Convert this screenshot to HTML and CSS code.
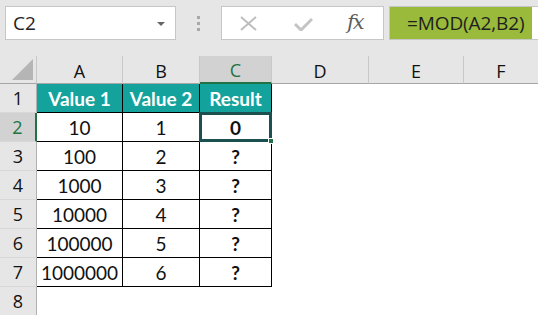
FILE: index.html
```html
<!DOCTYPE html>
<html>
<head>
<meta charset="utf-8">
<link rel="stylesheet" href="styles.css">
</head>
<body>
<div class="toolbar">
  <div class="namebox"><span class="nb-text">C2</span><span class="nb-arrow"></span></div>
  <div class="dots"><i></i><i></i><i></i></div>
  <div class="fbuttons">
    <svg class="ic-x" width="17" height="15" viewBox="0 0 17 15"><path d="M1 1 L16 14 M16 1 L1 14" stroke="#bdbdbd" stroke-width="2" fill="none"/></svg>
    <svg class="ic-check" width="19" height="14" viewBox="0 0 19 14"><path d="M1 7 L7 13 L18 2" stroke="#c4c4c4" stroke-width="3" fill="none"/></svg>
    <span class="fx">fx</span>
  </div>
  <div class="formula"><span class="ftext">=MOD(A2,B2)</span></div>
</div>
<div class="sheet">
  <div class="corner"><span class="tri"></span></div>
  <div class="ch">A</div>
  <div class="ch">B</div>
  <div class="ch sel">C</div>
  <div class="ch">D</div>
  <div class="ch">E</div>
  <div class="ch last">F</div>

  <div class="rh">1</div>
  <div class="c hd">Value 1</div>
  <div class="c hd">Value 2</div>
  <div class="c hd">Result</div>
  <div class="e"></div><div class="e"></div><div class="e"></div>

  <div class="rh sel">2</div>
  <div class="c">10</div>
  <div class="c">1</div>
  <div class="c b active">0<span class="handle"></span></div>
  <div class="e"></div><div class="e"></div><div class="e"></div>

  <div class="rh">3</div>
  <div class="c">100</div>
  <div class="c">2</div>
  <div class="c b">?</div>
  <div class="e"></div><div class="e"></div><div class="e"></div>

  <div class="rh">4</div>
  <div class="c">1000</div>
  <div class="c">3</div>
  <div class="c b">?</div>
  <div class="e"></div><div class="e"></div><div class="e"></div>

  <div class="rh">5</div>
  <div class="c">10000</div>
  <div class="c">4</div>
  <div class="c b">?</div>
  <div class="e"></div><div class="e"></div><div class="e"></div>

  <div class="rh">6</div>
  <div class="c">100000</div>
  <div class="c">5</div>
  <div class="c b">?</div>
  <div class="e"></div><div class="e"></div><div class="e"></div>

  <div class="rh">7</div>
  <div class="c">1000000</div>
  <div class="c">6</div>
  <div class="c b">?</div>
  <div class="e"></div><div class="e"></div><div class="e"></div>

  <div class="rh">8</div>
  <div class="e"></div><div class="e"></div><div class="e"></div>
  <div class="e"></div><div class="e"></div><div class="e"></div>
</div>
</body>
</html>
```
FILE: styles.css
```css
* { box-sizing: border-box; }
html, body { margin: 0; padding: 0; }
body {
  width: 538px;
  height: 315px;
  overflow: hidden;
  background: #fff;
  font-family: "Open Sans", "Noto Sans", sans-serif;
}
.toolbar {
  height: 56px;
  background: #e6e6e6;
  display: flex;
  align-items: flex-start;
  padding: 6px 0 0 5px;
}
.namebox {
  width: 171px;
  height: 34px;
  background: #fff;
  border: 1px solid #c6c6c6;
  display: flex;
  align-items: center;
  justify-content: space-between;
  padding: 0 10px 0 7px;
}
.nb-text { font-size: 19px; color: #222; }
.nb-arrow {
  width: 0; height: 0;
  border-left: 4px solid transparent;
  border-right: 4px solid transparent;
  border-top: 4px solid #666;
  margin-top: 1px;
}
.dots {
  width: 45px;
  height: 34px;
  display: flex;
  flex-direction: column;
  align-items: center;
  justify-content: center;
  gap: 3px;
}
.dots i { display: block; width: 3px; height: 3px; background: #a8a8a8; }
.fbuttons {
  width: 163px;
  height: 34px;
  background: #fff;
  border: 1px solid #c6c6c6;
  display: flex;
  align-items: center;
  padding-left: 18px;
}
.ic-x { margin-right: 37px; }
.ic-check { margin-right: 34px; margin-top: 1px; }
.fx {
  font-family: "DejaVu Serif", "Liberation Serif", serif;
  font-style: italic;
  font-size: 21px;
  color: #5f5f5f;
  margin-top: -2px;
  letter-spacing: -2px;
}
.formula {
  margin-left: 5px;
  flex: 1;
  height: 34px;
  background: #fff;
  border-top: 1px solid #c6c6c6;
  border-left: 1px solid #c6c6c6;
  border-bottom: 1px solid #c6c6c6;
  display: flex;
}
.ftext {
  width: 142px;
  background: #9aba3b;
  color: #1e1e1e;
  font-size: 19px;
  padding-left: 17px;
  line-height: 32px;
  white-space: nowrap;
  letter-spacing: -0.1px;
}
.sheet {
  display: grid;
  grid-template-columns: 37px 86px 77px 72px 97px 95px 74px;
  grid-template-rows: 28px repeat(8, 29px);
}
.corner {
  background: #e6e6e6;
  border-right: 1px solid #c8c8c8;
  border-bottom: 1px solid #a6a6a6;
  position: relative;
}
.tri {
  position: absolute;
  right: 3px;
  bottom: 3px;
  width: 0; height: 0;
  border-left: 21px solid transparent;
  border-bottom: 21px solid #b5b5b5;
}
.ch {
  background: #e6e6e6;
  border-right: 1px solid #c8c8c8;
  border-bottom: 1px solid #a6a6a6;
  display: flex;
  align-items: center;
  justify-content: center;
  font-size: 18px;
  color: #111;
  padding-top: 2px;
}
.ch.sel {
  background: #d2d2d2;
  color: #217346;
  border-bottom: 2px solid #217346;
}
.ch.last { border-right: none; }
.rh {
  background: #e6e6e6;
  border-right: 1px solid #b0b0b0;
  border-bottom: 1px solid #d8d8d8;
  display: flex;
  align-items: center;
  justify-content: center;
  font-size: 18px;
  color: #111;
}
.rh.sel {
  background: #d2d2d2;
  color: #217346;
  border-right: 2px solid #217346;
}
.c {
  border-right: 1px solid #000;
  border-bottom: 1px solid #000;
  display: flex;
  align-items: center;
  justify-content: center;
  font-family: Lato, "Open Sans", sans-serif;
  font-size: 19px;
  color: #111;
  padding-top: 1px;
}
.c.hd {
  background: #13a39c;
  color: #fff;
  font-weight: 700;
  border-bottom-color: #000;
  border-right-color: #000;
}
.c.b { font-weight: 700; }
.c.active {
  position: relative;
  border: 3px solid #1c4f50;
  margin: -1px 0 0 -1px;
  background: #fff;
}
.handle {
  position: absolute;
  right: -5px;
  bottom: -5px;
  width: 6px;
  height: 6px;
  background: #217346;
  border: 1px solid #fff;
}
.e { background: #fff; }
```
